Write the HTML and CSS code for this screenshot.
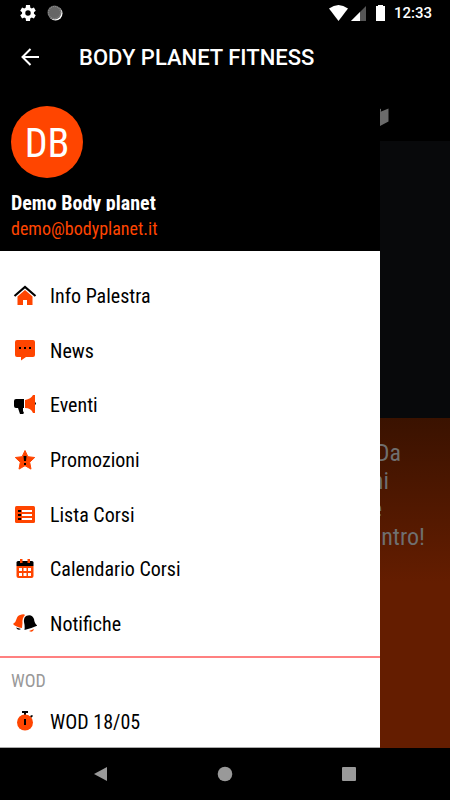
FILE: index.html
```
<!DOCTYPE html>
<html lang="it">
<head>
    <meta charset="UTF-8">
    <meta name="viewport" content="width=device-width, initial-scale=1.0">
    <title>Body Planet Fitness</title>
    <link rel="stylesheet" href="styles.css">
</head>
<body>

    <!-- Status bar -->
    <div class="status-bar">
        <svg class="status-icon" viewBox="2 2 20 20"><path fill="#fff" fill-rule="evenodd" d="M19.4 13a7.500 7.500 0 0 0 0-2l2.300-1.800-2.300-4-2.800 1.100a8 8 0 0 0-1.700-1L14.500 2h-5l-.4 3.300a8 8 0 0 0-1.700 1L4.600 5.200l-2.300 4L4.600 11a7.500 7.500 0 0 0 0 2l-2.300 1.800 2.300 4 2.800-1.100a8 8 0 0 0 1.700 1l.4 3.300h5l.4-3.300a8 8 0 0 0 1.700-1l2.800 1.100 2.300-4zM12 15.400a3.400 3.400 0 1 1 0-6.800 3.400 3.400 0 0 1 0 6.800z"/></svg>
        <svg class="status-icon sync-icon" viewBox="0 0 16 16"><circle cx="8.500" cy="8.500" r="7" fill="#fff"/><circle cx="7.500" cy="7.500" r="7" fill="#666"/><circle cx="7.500" cy="7.500" r="6" fill="none" stroke="#999" stroke-dasharray="1 1"/></svg>
        <svg class="signal-icons" viewBox="0 0 58 18"><path fill="#fff" d="M0 4.500Q9.500-2.500 19 4.500L9.500 17z"/><path fill="#555" d="M37 2v15H22z"/><path fill="#fff" d="M31 8v9h-9z"/><path fill="#fff" d="M49 1h5v1h2v15h-9V2h2z"/></svg>
        <span class="clock">12:33</span>
    </div>

    <header class="app-bar">
        <button type="button" class="back" aria-label="Indietro">
            <svg width="20" height="20" viewBox="0 0 20 20"><path fill="none" stroke="#fff" stroke-width="2" d="M19 10H3M10.500 2 2.500 10l8 8"/></svg>
        </button>
        <h1>BODY PLANET FITNESS</h1>
    </header>

    <div class="stage">
        <!-- Page under the drawer -->
        <main class="page">
            <div class="tabs">
                <svg width="24" height="24" viewBox="0 0 24 24"><path fill="#6a6a6a" d="M2 6l6-3v16l-6 3zM9 3l6 2v3l-6-2zM14 8l8.500-3.500v13L14 22z"/></svg>
            </div>
            <div class="photo"></div>
            <div class="promo">
                <span class="line-1">Da</span>
                <span class="line-2">ni</span>
                <span class="line-3">e</span>
                <span class="line-4">ntro!</span>
            </div>
        </main>

        <!-- Drawer -->
        <aside class="drawer">
            <div class="profile">
                <div class="avatar">DB</div>
                <div class="name">Demo Body planet</div>
                <div class="email">demo@bodyplanet.it</div>
            </div>

            <nav class="menu">
                <a href="#info">
                    <svg viewBox="0 0 24 24"><path fill="#ff4500" d="M12 6l7.500 6.500V21H14v-5h-4v5H4.500v-8.500z"/><path fill="none" stroke="#000" stroke-width="2.200" d="M1.500 12 12 3l10.500 9"/></svg>
                    Info Palestra
                </a>
                <a href="#news">
                    <svg viewBox="0 0 24 24"><path fill="#ff4500" d="M4 1h16q2 0 2 2v13q0 2-2 2h-7l-5 3.500V18H4q-2 0-2-2V3q0-2 2-2z"/><path d="M6 8h2v2H6zM11 8h2v2h-2zM16 8h2v2h-2z"/></svg>
                    News
                </a>
                <a href="#eventi">
                    <svg viewBox="0 0 24 24"><path d="M3 6h8v9h-1v3l1 2-1 1H7l-2-6H3q-2 0-2-2V8q0-2 2-2zM22 9q2 1.500 0 3z"/><path fill="#ff4500" d="M12 7q6-1 8-5h2v18h-2q-2-5-8-5z"/></svg>
                    Eventi
                </a>
                <a href="#promozioni">
                    <svg viewBox="0 0 24 24"><path fill="#ff4500" stroke="#ff4500" stroke-linejoin="round" d="M12 2.500l2.900 6.200 6.800.8-5 4.700 1.300 6.900-6-3.400-6 3.400 1.300-6.900-5-4.700 6.800-.8z"/><path d="M10.500 8h3l-.5 5h-2zM11 15h2v2h-2z"/></svg>
                    Promozioni
                </a>
                <a href="#lista">
                    <svg viewBox="0 0 24 24"><rect x="2" y="3" width="20" height="17" rx="1.500" fill="#ff4500"/><path fill="#fff" d="M9 7h10v2H9zM9 11h10v2H9zM9 15h10v2H9z"/><path d="M5 7h3v2H5zM5 11h3v2H5zM5 15h3v2H5z"/></svg>
                    Lista Corsi
                </a>
                <a href="#calendario">
                    <svg viewBox="0 0 24 24"><path fill="#ff4500" d="M3.500 9h17v10q0 2-2 2h-13q-2 0-2-2z"/><path d="M5 4h14q1.500 0 1.500 1.500V9h-17V5.500Q3.500 4 5 4z"/><path fill="#ff4500" d="M7 2h2.500v4H7zM14.500 2H17v4h-2.500z"/><path fill="#fff" d="M6 11h3v3H6zM10.500 11h3v3h-3zM15 11h3v3h-3zM6 16h3v3H6zM10.500 16h3v3h-3zM15 16h3v3h-3z"/></svg>
                    Calendario Corsi
                </a>
                <a href="#notifiche">
                    <svg viewBox="0 0 24 24"><path fill="#ff4500" d="M7 3q4-1.500 5 0-3 3-2.500 8L9 16Q3 15 0 12q3-2 3.500-5Q4.500 3.500 7 3z"/><path d="M3 15.500l5 1.500q-3 2-5-1.500z"/><path fill="#ff4500" d="M16 19l5-2q-1 4-5 2z"/><path d="M13 4q6-2.500 8 3 .5 5 3.500 6.500-5 2.500-13 4.500.5-4-.5-8-.5-4.500 2-6z"/></svg>
                    Notifiche
                </a>
            </nav>

            <section class="wod">
                <h2>WOD</h2>
                <a href="#wod">
                    <svg viewBox="0 0 24 24"><path d="M9 1h6v2h-2v3h-2V3H9zM17 6l2-1 1 1-2 2z"/><circle cx="12" cy="12.500" r="8" fill="#ff4500"/><path d="M11 9h2v6h-2z"/></svg>
                    WOD 18/05
                </a>
            </section>
        </aside>
    </div>

    <!-- System navigation -->
    <div class="nav-bar">
        <button type="button" aria-label="Back"><svg width="16" height="16" viewBox="0 0 16 16"><path fill="#999" d="M14 1v14L1 8z"/></svg></button>
        <button type="button" aria-label="Home"><svg width="16" height="16" viewBox="0 0 16 16"><circle cx="8" cy="8" r="7.300" fill="#999"/></svg></button>
        <button type="button" aria-label="Recent"><svg width="16" height="16" viewBox="0 0 16 16"><rect x="1" y="1" width="14" height="14" rx="1" fill="#999"/></svg></button>
    </div>

</body>
</html>
```
FILE: styles.css
```
* {
    box-sizing: border-box;
}

body {
    margin: 0;
    min-height: 100vh;
    display: flex;
    flex-direction: column;
    background: #000;
    color: #fff;
    font-family: "Roboto Condensed", "Liberation Sans Narrow", Roboto, sans-serif;
}

h1, h2 {
    margin: 0;
}

button {
    display: flex;
    padding: 0;
    border: none;
    background: none;
    cursor: pointer;
}

a {
    color: #000;
    text-decoration: none;
}

.status-bar {
    display: flex;
    align-items: center;
    height: 26px;
    padding: 0 18px 0 20px;
    font-family: Roboto, sans-serif;
}

.status-icon {
    width: 16px;
    height: 16px;
}

.sync-icon {
    margin-left: 11px;
}

.signal-icons {
    width: 58px;
    height: 18px;
    margin-left: auto;
}

.clock {
    margin-left: 7px;
    font-size: 15px;
    font-weight: 500;
}

.app-bar {
    display: flex;
    align-items: center;
    gap: 39px;
    height: 64px;
    padding: 0 20px 2px;
}

.app-bar h1 {
    font-family: Roboto, sans-serif;
    font-size: 22px;
    font-weight: 500;
}

.stage {
    position: relative;
    flex: 1;
    display: flex;
}

.page {
    flex: 1;
    display: flex;
    flex-direction: column;
}

.tabs {
    display: flex;
    align-items: center;
    justify-content: flex-end;
    height: 51px;
    padding-right: 60px;
}

.photo {
    height: 277px;
    background: #08090b;
}

.promo {
    flex: 1;
    display: flex;
    flex-direction: column;
    align-items: flex-end;
    padding-top: 21px;
    background: linear-gradient(#3a1200, #641d00 50%);
    color: #6f6f6f;
    font-size: 24px;
    line-height: 28px;
}

.line-1 {
    padding-right: 49px;
}

.line-2 {
    padding-right: 61px;
}

.line-3 {
    padding-right: 68px;
}

.line-4 {
    padding-right: 25px;
}

.drawer {
    position: absolute;
    top: 0;
    bottom: 0;
    left: 0;
    right: 70px;
    display: flex;
    flex-direction: column;
    background: #fff;
    border-bottom: 1px solid #aaa;
}

.profile {
    padding: 16px 11px 11px;
    background: #000;
}

.avatar {
    width: 72px;
    height: 72px;
    border-radius: 50%;
    background: #ff4500;
    font-size: 40px;
    line-height: 76px;
    text-align: center;
}

.name {
    height: 20px;
    margin-top: 13px;
    overflow: hidden;
    font-size: 20px;
    font-weight: bold;
    line-height: 24px;
}

.email {
    margin-top: 7px;
    color: #ff4500;
    font-size: 18px;
    line-height: 22px;
}

.menu {
    flex: 1;
    display: grid;
    grid-auto-rows: 1fr;
    padding: 18px 0 5px;
}

.menu a,
.wod a {
    display: flex;
    align-items: center;
    gap: 13px;
    padding-left: 13px;
    font-size: 20px;
}

.menu svg,
.wod svg {
    width: 24px;
    height: 24px;
}

.wod {
    border-top: 2px solid #ff8080;
}

.wod h2 {
    padding: 12px 11px 5px;
    color: #999;
    font-size: 18px;
    font-weight: normal;
    line-height: 22px;
}

.wod a {
    height: 50px;
}

.nav-bar {
    display: flex;
    align-items: center;
    justify-content: space-between;
    height: 52px;
    padding: 0 93px;
}
```
